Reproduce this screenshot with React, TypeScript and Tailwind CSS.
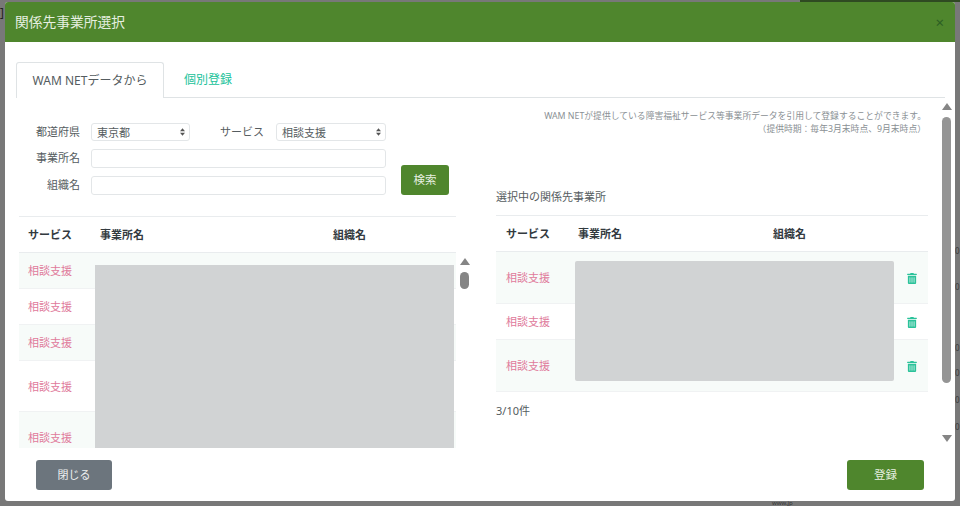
import React from "react";
import { FaTrashAlt } from "react-icons/fa";

const FONT = "[font-family:'Noto_Sans','Noto_Sans_CJK_JP',sans-serif]";

interface RowItem {
  height: string;
  striped: boolean;
}

const leftRows: RowItem[] = [
  { height: "h-[36px]", striped: true },
  { height: "h-[36px]", striped: false },
  { height: "h-[36px]", striped: true },
  { height: "h-[51px]", striped: false },
  { height: "h-[52px]", striped: true },
];

const rightRows: RowItem[] = [
  { height: "h-[52px]", striped: true },
  { height: "h-[36px]", striped: false },
  { height: "h-[52px]", striped: true },
];

function FakeSelect({ value, className }: { value: string; className: string }) {
  return (
    <div className={`relative h-[18px] ${className}`}>
      <select
        defaultValue={value}
        className="w-full h-full appearance-none bg-white border border-[#e3e6e8] rounded-[3px] pl-[5px] text-[11px] leading-none text-[#555c60] outline-none"
      >
        <option>{value}</option>
      </select>
      {/* Up/down arrows */}
      <svg
        viewBox="0 0 6 9"
        className="absolute right-[5px] top-[5px] w-[5px] h-[8px] text-[#555555]"
      >
        <path d="M3 0 6 3.6H0zM3 9 0 5.4h6z" fill="currentColor" />
      </svg>
    </div>
  );
}

function ScrollArrow({ down, className }: { down?: boolean; className: string }) {
  return (
    <svg viewBox="0 0 10 7" className={`text-[#858585] ${className}`}>
      <path d={down ? "M0 0h10L5 7z" : "M5 0l5 7H0z"} fill="currentColor" />
    </svg>
  );
}

function HeaderCells({ firstCol, nameCol }: { firstCol: string; nameCol: string }) {
  return (
    <div className="flex h-[37px] items-center pt-[2px] border-y border-[#e9ecee] text-[11px] font-bold text-[#333a3f]">
      <div className={firstCol}>サービス</div>
      <div className={nameCol}>事業所名</div>
      <div>組織名</div>
    </div>
  );
}

export default function App() {
  return (
    <div className={`relative w-[960px] h-[506px] overflow-hidden bg-[#787878] pt-[2px] pl-[5px] ${FONT}`}>
      {/* Page behind the dialog */}
      <div className="absolute right-0 top-0 w-[160px] h-[2px] bg-[#2f4a22]" />
      <span className="absolute left-0 top-[4px] text-[12px] text-[#222222]">]</span>
      <div className="absolute left-[955px] top-[244px] flex flex-col text-[8px] leading-[13px] text-[#3a3a3a]">
        <span>0</span>
        <span className="mt-[23px]">0</span>
        <span className="mt-[48px]">0</span>
        <span className="mt-[12px]">0</span>
        <span className="mt-[14px]">0</span>
        <span className="mt-[14px]">0</span>
      </div>
      <span className="absolute left-[772px] top-[501px] text-[6px] leading-[5px] text-[#333333]">www.jp</span>

      <div className="relative flex flex-col w-[950px] h-[499px] bg-white rounded-[3px] overflow-hidden">
        {/* Modal Header */}
        <div className="flex items-center justify-between h-[40px] shrink-0 bg-[#4f862d] pl-[10px] pr-[11px]">
          <h2 className="text-[13.75px] font-normal text-[#e6efe0]">関係先事業所選択</h2>
          <span className="text-[15px] leading-none text-[#2c5f24]">×</span>
        </div>

        {/* Tabs */}
        <div className="flex mt-[20px] ml-[11px] w-[929px] h-[36px] shrink-0 border-b border-[#dfe3e5]">
          <div className="flex items-center justify-center w-[148px] h-[36px] bg-white border border-b-0 border-[#dfe3e5] rounded-t-[3px] text-[12px] text-[#555c60]">
            WAM NETデータから
          </div>
          <div className="flex items-center pl-[20px] text-[12px] text-[#20c29a]">個別登録</div>
        </div>

        {/* Body */}
        <div className="flex h-[350px] shrink-0 overflow-hidden">
          {/* Left column */}
          <div className="w-[440px] ml-[12px] shrink-0 flex flex-col">
            <div className="flex mt-[25px] h-[72px]">
              <div className="flex flex-col w-[369px]">
                <div className="flex items-center h-[18px] text-[11px] text-[#555c60]">
                  <span className="w-[63px] text-right">都道府県</span>
                  <FakeSelect value="東京都" className="w-[99px] ml-[11px]" />
                  <span className="ml-[30px] w-[56px]">サービス</span>
                  <FakeSelect value="相談支援" className="w-[110px]" />
                </div>
                <div className="flex items-center h-[19px] mt-[8px] text-[11px] text-[#555c60]">
                  <span className="w-[63px] text-right">事業所名</span>
                  <input className="w-[295px] h-full ml-[11px] border border-[#e3e6e8] rounded-[3px] bg-white" />
                </div>
                <div className="flex items-center h-[19px] mt-[8px] text-[11px] text-[#555c60]">
                  <span className="w-[63px] text-right">組織名</span>
                  <input className="w-[295px] h-full ml-[11px] border border-[#e3e6e8] rounded-[3px] bg-white" />
                </div>
              </div>
              <div className="flex flex-col justify-end ml-[15px]">
                <button className="w-[48px] h-[30px] bg-[#4f862d] rounded-[3px] text-[11.5px] text-[#e6efe0]">
                  検索
                </button>
              </div>
            </div>

            {/* Search results */}
            <div className="relative mt-[21px] ml-[2px] w-[437px] flex-1">
              <HeaderCells firstCol="pl-[9px] w-[81px]" nameCol="w-[233px]" />
              {leftRows.map((row, i) => (
                <div
                  key={i}
                  className={`flex items-center pl-[9px] pt-[2px] border-b border-[#f0f2f3] text-[11px] text-[#e07a9b] ${row.height} ${row.striped ? "bg-[#f7fbf9]" : "bg-white"}`}
                >
                  相談支援
                </div>
              ))}
              {/* Redacted block */}
              <div className="absolute left-[76px] top-[49px] w-[359px] h-[183px] bg-[#d1d3d4]" />
              {/* Inner scrollbar */}
              <ScrollArrow className="absolute left-[441px] top-[42px] w-[10px] h-[7px]" />
              <div className="absolute left-[441px] top-[56px] w-[9px] h-[17px] rounded-full bg-[#858585]" />
            </div>
          </div>

          {/* Right column */}
          <div className="relative w-[432px] ml-[39px] shrink-0 flex flex-col">
            <p className="mt-[12px] pr-[2px] text-right text-[8.8px] leading-[13px] text-[#8a9094]">
              WAM NETが提供している障害福祉サービス等事業所データを引用して登録することができます。
              <br />
              （提供時期：毎年3月末時点、9月末時点）
            </p>
            <p className="mt-[52px] h-[27px] text-[11px] leading-[18px] text-[#555c60]">選択中の関係先事業所</p>
            <HeaderCells firstCol="pl-[10px] w-[82px]" nameCol="w-[195px]" />
            {rightRows.map((row, i) => (
              <div
                key={i}
                className={`flex items-center justify-between pl-[10px] pr-[11px] pt-[2px] border-b border-[#f0f2f3] text-[11px] text-[#e07a9b] ${row.height} ${row.striped ? "bg-[#f7fbf9]" : "bg-white"}`}
              >
                相談支援
                <FaTrashAlt className="w-[10px] h-[11px] text-[#2bc29a]" />
              </div>
            ))}
            <p className="mt-[11px] text-[11px] text-[#555c60]">3/10件</p>
            {/* Redacted block */}
            <div className="absolute left-[79px] top-[163px] w-[319px] h-[120px] rounded-[2px] bg-[#d1d3d4]" />
          </div>

          {/* Outer scrollbar */}
          <div className="relative ml-[14px] w-[10px] h-full">
            <ScrollArrow className="absolute left-0 top-[5px] w-[10px] h-[7px]" />
            <div className="absolute left-0 top-[19px] w-[9px] h-[266px] rounded-full bg-[#959595]" />
            <ScrollArrow down className="absolute left-0 top-[337px] w-[10px] h-[7px]" />
          </div>
        </div>

        {/* Modal Footer */}
        <div className="flex justify-between pl-[31px] pr-[31px] pt-[12px]">
          <button className="w-[76px] h-[30px] rounded-[3px] bg-[#6c757d] text-[11px] text-[#eef0f1]">閉じる</button>
          <button className="w-[77px] h-[30px] rounded-[3px] bg-[#4f862d] text-[11.5px] text-[#e6efe0]">登録</button>
        </div>
      </div>
    </div>
  );
}
